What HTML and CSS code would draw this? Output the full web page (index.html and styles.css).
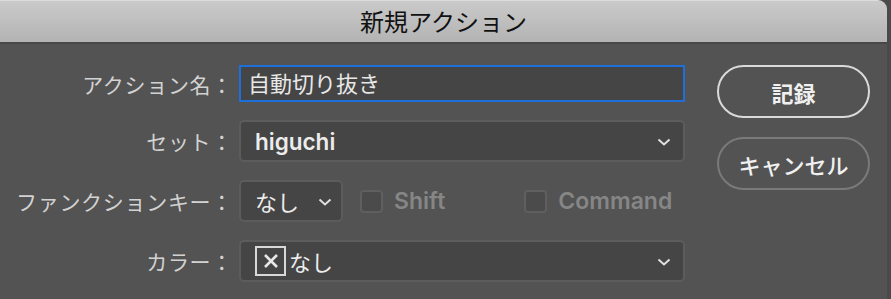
FILE: index.html
```html
<!DOCTYPE html>
<html lang="ja">
<head>
    <meta charset="UTF-8">
    <title>新規アクション</title>
    <link rel="stylesheet" href="styles.css">
</head>
<body>
    <div class="window">
        <div class="titlebar">新規アクション</div>
        <div class="content">
            <form class="grid-form">
                <label class="label" for="name">アクション名：</label>
                <div class="text-input focused" id="name">自動切り抜き</div>

                <label class="label">セット：</label>
                <div class="select wide">
                    <span class="value latin">higuchi</span>
                    <svg class="chevron" width="14" height="8" viewBox="0 0 14 8"><path d="M1.5 1.5 L7 6.5 L12.5 1.5" fill="none" stroke="#e0e0e0" stroke-width="2"/></svg>
                </div>

                <label class="label">ファンクションキー：</label>
                <div class="key-row">
                    <div class="select small">
                        <span class="value">なし</span>
                        <svg class="chevron" width="14" height="8" viewBox="0 0 14 8"><path d="M1.5 1.5 L7 6.5 L12.5 1.5" fill="none" stroke="#e0e0e0" stroke-width="2"/></svg>
                    </div>
                    <div class="check shift"><span class="box"></span><span class="latin">Shift</span></div>
                    <div class="check command"><span class="box"></span><span class="latin">Command</span></div>
                </div>

                <label class="label">カラー：</label>
                <div class="select wide">
                    <span class="value color">
                        <span class="swatch">
                            <svg width="18" height="18" viewBox="0 0 18 18"><path d="M3 3 L15 15 M15 3 L3 15" stroke="#e8e8e8" stroke-width="2.6"/></svg>
                        </span>なし
                    </span>
                    <svg class="chevron" width="14" height="8" viewBox="0 0 14 8"><path d="M1.5 1.5 L7 6.5 L12.5 1.5" fill="none" stroke="#e0e0e0" stroke-width="2"/></svg>
                </div>
            </form>

            <div class="buttons">
                <button type="button" class="button primary">記録</button>
                <button type="button" class="button">キャンセル</button>
            </div>
        </div>
    </div>
</body>
</html>
```

FILE: styles.css
```css
* {
    box-sizing: border-box;
    margin: 0;
    padding: 0;
}
html {
    background: #4a4a4a;
}
body {
    margin: 0;
    font-family: "Noto Sans CJK JP", sans-serif;
    color: #d4d4d4;
}
.window {
    width: 887px;
    height: 299px;
    background-color: #535353;
    border-top-right-radius: 9px;
    overflow: hidden;
}
.titlebar {
    height: 44px;
    background: linear-gradient(#cacaca, #b3b3b3);
    border-top: 1px solid #dcdcdc;
    border-bottom: 2px solid #474747;
    color: #111;
    font-size: 24px;
    line-height: 40px;
    text-align: center;
}
.content {
    display: flex;
    padding-top: 21px;
}
.grid-form {
    display: grid;
    grid-template-columns: 232px 446px;
    grid-template-rows: 37px 42px 42px 42px;
    column-gap: 7px;
    row-gap: 18px;
    align-items: center;
}
.grid-form > .text-input {
    margin-bottom: 1px;
}
.label {
    text-align: right;
    font-size: 21px;
    color: #d2d2d2;
    white-space: nowrap;
    letter-spacing: 0.7px;
    margin-right: -1px;
}
.latin {
    font-family: Inter, "Noto Sans CJK JP", sans-serif;
    font-weight: 600;
}
.text-input {
    height: 37px;
    background-color: #454545;
    border: 2px solid #1d6fdc;
    font-size: 22px;
    line-height: 31px;
    padding-left: 7px;
    color: #e8e8e8;
}
.select {
    height: 42px;
    background-color: #454545;
    border: 2px solid #5c5c5c;
    border-radius: 5px;
    display: flex;
    align-items: center;
    justify-content: space-between;
    padding: 0 12px 0 14px;
    color: #ececec;
    font-size: 22px;
}
.select .value.latin {
    font-size: 22.5px;
}
.select .chevron {
    flex-shrink: 0;
    margin-top: 2px;
}
.key-row {
    display: flex;
    align-items: center;
}
.select.small {
    width: 104px;
    padding-right: 9px;
}
.check {
    display: flex;
    align-items: center;
    color: #868686;
    font-size: 23px;
}
.check .box {
    width: 23px;
    height: 23px;
    border: 2px solid #5f5f5f;
    border-radius: 4px;
    background-color: #4b4b4b;
    margin-right: 11px;
}
.shift {
    margin-left: 17px;
}
.command {
    margin-left: 79px;
}
.color {
    display: flex;
    align-items: center;
    margin-left: 0;
}
.swatch {
    width: 31px;
    height: 30px;
    border: 2px solid #d8d8d8;
    display: flex;
    align-items: center;
    justify-content: center;
    margin-right: 3px;
}
.buttons {
    display: flex;
    flex-direction: column;
    gap: 19px;
    margin-left: 32px;
}
.button {
    width: 153px;
    height: 53px;
    border-radius: 27px;
    border: 2px solid #7a7a7a;
    background: transparent;
    color: #f0f0f0;
    font-family: "Noto Sans CJK JP", sans-serif;
    font-size: 22px;
    font-weight: 500;
}
.button.primary {
    border-color: #dadada;
    font-weight: bold;
}
```
